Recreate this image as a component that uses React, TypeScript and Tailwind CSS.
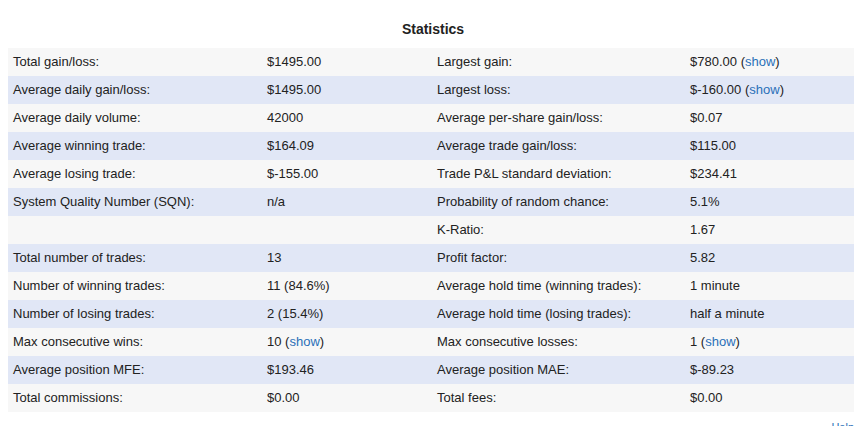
type Cell = { text: string; link?: boolean };

const rows: [string, Cell, string, Cell][] = [
  ["Total gain/loss:", { text: "$1495.00" }, "Largest gain:", { text: "$780.00", link: true }],
  ["Average daily gain/loss:", { text: "$1495.00" }, "Largest loss:", { text: "$-160.00", link: true }],
  ["Average daily volume:", { text: "42000" }, "Average per-share gain/loss:", { text: "$0.07" }],
  ["Average winning trade:", { text: "$164.09" }, "Average trade gain/loss:", { text: "$115.00" }],
  ["Average losing trade:", { text: "$-155.00" }, "Trade P&L standard deviation:", { text: "$234.41" }],
  ["System Quality Number (SQN):", { text: "n/a" }, "Probability of random chance:", { text: "5.1%" }],
  ["", { text: "" }, "K-Ratio:", { text: "1.67" }],
  ["Total number of trades:", { text: "13" }, "Profit factor:", { text: "5.82" }],
  ["Number of winning trades:", { text: "11 (84.6%)" }, "Average hold time (winning trades):", { text: "1 minute" }],
  ["Number of losing trades:", { text: "2 (15.4%)" }, "Average hold time (losing trades):", { text: "half a minute" }],
  ["Max consecutive wins:", { text: "10", link: true }, "Max consecutive losses:", { text: "1", link: true }],
  ["Average position MFE:", { text: "$193.46" }, "Average position MAE:", { text: "$-89.23" }],
  ["Total commissions:", { text: "$0.00" }, "Total fees:", { text: "$0.00" }],
];

function Value({ cell }: { cell: Cell }) {
  return (
    <>
      {cell.text}
      {cell.link && (
        <>
          {" "}(<a className="text-[#2a70b8] cursor-pointer">show</a>)
        </>
      )}
    </>
  );
}

export default function App() {
  return (
    <div className="min-h-[426px] bg-white text-[#222] font-['Liberation_Sans',Arial,sans-serif] text-[13px]">
      <h2 className="text-center font-bold text-[14px] pt-[19px] h-[48px]">Statistics</h2>
      <div className="ml-2 w-[846px]">
        {rows.map((r, i) => (
          <div
            key={i}
            className={`grid grid-cols-[254px_170px_253px_169px] h-[28px] items-center ${
              i % 2 === 0 ? "bg-[#f7f7f7]" : "bg-[#e1e7f6]"
            }`}
          >
            <div className="pl-[5px]">{r[0]}</div>
            <div className="pl-[5px]">
              <Value cell={r[1]} />
            </div>
            <div className="pl-[5px]">{r[2]}</div>
            <div className="pl-[5px]">
              <Value cell={r[3]} />
            </div>
          </div>
        ))}
      </div>
      <div className="w-[854px] text-right text-[11px] text-[#2a70b8] mt-[10px] leading-none">Help</div>
    </div>
  );
}
